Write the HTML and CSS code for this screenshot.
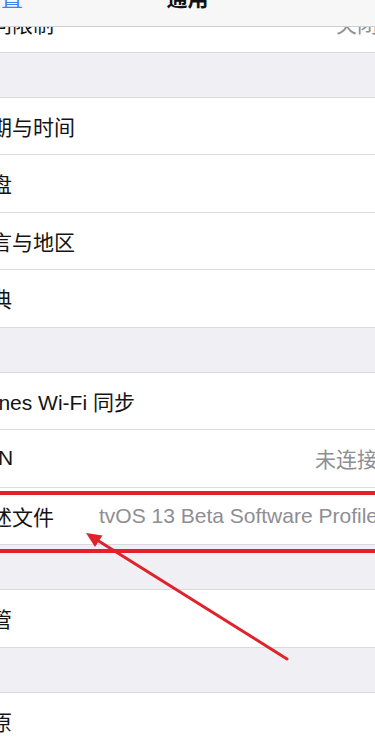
FILE: index.html
```html
<!DOCTYPE html>
<html lang="zh-CN">
<head>
<meta charset="utf-8">
<title>通用</title>
<link rel="stylesheet" href="styles.css">
</head>
<body>
<div class="screen">
  <div class="list">
    <section class="group group-first">
      <div class="row"><span class="label">访问限制</span><span class="value">关闭</span></div>
    </section>
    <section class="group">
      <div class="row"><span class="label">日期与时间</span></div>
      <div class="row"><span class="label">键盘</span></div>
      <div class="row"><span class="label">语言与地区</span></div>
      <div class="row"><span class="label">词典</span></div>
    </section>
    <section class="group">
      <div class="row"><span class="label">iTunes Wi-Fi 同步</span></div>
      <div class="row"><span class="label">VPN</span><span class="value">未连接</span></div>
      <div class="row"><span class="label">描述文件</span><span class="value">tvOS 13 Beta Software Profile</span></div>
    </section>
    <section class="group">
      <div class="row"><span class="label">监管</span></div>
    </section>
    <section class="group">
      <div class="row"><span class="label">还原</span></div>
    </section>
  </div>

  <header class="nav">
    <span class="nav-back">设置</span>
    <span class="nav-title">通用</span>
  </header>

  <div class="mark mark-top"></div>
  <div class="mark mark-bottom"></div>

  <svg class="arrow" width="375" height="739" viewBox="0 0 375 739">
    <line x1="287" y1="659" x2="97" y2="540" stroke="#e0222b" stroke-width="3" stroke-linecap="round"/>
    <polygon points="86,533 102.5,535.5 95,547" fill="#e0222b"/>
  </svg>
</div>
</body>
</html>
```
FILE: styles.css
```css
html, body {
  margin: 0;
  padding: 0;
  background: #efeff4;
}

body {
  font-family: "Liberation Sans", "Noto Sans CJK SC", sans-serif;
  color: #141414;
  overflow: hidden;
}

.screen {
  position: relative;
  width: 375px;
  height: 739px;
  overflow: hidden;
  background: #efeff4;
}

.list {
  margin-top: -6px;
  margin-left: -30px;
  width: 450px;
}

.group {
  background: #ffffff;
  border-top: 1px solid #d9d9de;
  border-bottom: 1px solid #d9d9de;
  margin-top: 44px;
}

.group-first {
  margin-top: 0;
}

.row {
  display: flex;
  align-items: center;
  height: 56.5px;
  padding-right: 42px;
  font-size: 21px;
  white-space: nowrap;
}

.row + .row {
  border-top: 1px solid #dcdce0;
}

.label {
  flex: none;
}

.value {
  margin-left: auto;
  color: #8e8e93;
}

.nav {
  position: absolute;
  top: 0;
  left: 0;
  width: 375px;
  height: 27px;
  background: #f7f7f8;
  border-bottom: 1px solid #cfcfd3;
  box-sizing: border-box;
  overflow: hidden;
  display: flex;
  align-items: flex-start;
}

.nav-back {
  margin-left: -21px;
  margin-top: -12px;
  line-height: 22px;
  font-size: 22px;
  color: #3d82f0;
}

.nav-title {
  position: absolute;
  left: 0;
  right: 0;
  top: -12px;
  text-align: center;
  line-height: 22px;
  font-size: 21px;
  font-weight: bold;
  color: #111;
}

.mark {
  position: absolute;
  left: 0;
  width: 375px;
  height: 4px;
  background: #e2212c;
}

.mark-top {
  top: 491px;
}

.mark-bottom {
  top: 549px;
}

.arrow {
  position: absolute;
  top: 0;
  left: 0;
  pointer-events: none;
}
```
